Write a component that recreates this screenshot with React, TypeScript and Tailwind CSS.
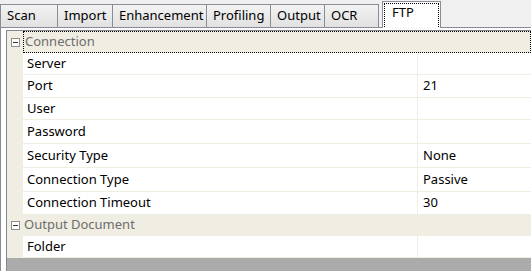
import React from "react";

const tabs = [
  { label: "Scan", w: "w-[58px]" },
  { label: "Import", w: "w-[56px]" },
  { label: "Enhancement", w: "w-[95px]" },
  { label: "Profiling", w: "w-[65px]" },
  { label: "Output", w: "w-[55px]" },
  { label: "OCR", w: "w-[55px]" },
];

type Row = { kind: "cat" | "prop"; label: string; value?: string; h: string; focus?: boolean };

const rows: Row[] = [
  { kind: "cat", label: "Connection", h: "h-[22px]", focus: true },
  { kind: "prop", label: "Server", h: "h-[22px]" },
  { kind: "prop", label: "Port", value: "21", h: "h-[23px]" },
  { kind: "prop", label: "User", h: "h-[22px]" },
  { kind: "prop", label: "Password", h: "h-[24px]" },
  { kind: "prop", label: "Security Type", value: "None", h: "h-[24px]" },
  { kind: "prop", label: "Connection Type", value: "Passive", h: "h-[24px]" },
  { kind: "prop", label: "Connection Timeout", value: "30", h: "h-[23px]" },
  { kind: "cat", label: "Output Document", h: "h-[21px]" },
  { kind: "prop", label: "Folder", h: "h-[22px]" },
];

const MinusBox = () => (
  <div className="w-[9px] h-[9px] border border-[#8e8f8f] bg-white flex items-center justify-center">
    <div className="w-[5px] h-px bg-[#333]" />
  </div>
);

export default function App() {
  return (
    <div
      className="w-[531px] h-[271px] overflow-hidden bg-[#f0f0f0] flex flex-col text-[13px] text-black"
      style={{ fontFamily: '"Noto Sans", "Open Sans", sans-serif' }}
    >
      {/* Tab strip */}
      <div className="h-[27px] flex items-end shrink-0">
        {tabs.map((t) => (
          <div
            key={t.label}
            className={`${t.w} h-[23px] -mr-px border border-b-0 border-[#898c95] bg-gradient-to-b from-[#f3f3f3] to-[#e1e1e1] pl-[6px] leading-[21px]`}
          >
            {t.label}
          </div>
        ))}
        <div className="w-[4px] h-[23px]" />
        <div className="w-[59px] h-[27px] border border-b-0 border-[#898c95] bg-white p-px relative z-10 -mb-px">
          <div className="h-full border border-dotted border-black border-b-0 pl-[7px] leading-[17px]">FTP</div>
        </div>
        <div className="flex-1" />
      </div>

      {/* Panel */}
      <div className="flex-1 border-t border-l border-[#898c95] bg-white pt-[2px] pl-[5px]">
        <div className="border-t border-l border-[#828790] h-full flex flex-col">
          <div className="flex flex-col">
            {rows.map((r) =>
              r.kind === "cat" ? (
                <div key={r.label} className={`${r.h} flex bg-[#f0ede2]`}>
                  <div className="w-[16px] shrink-0 flex items-center justify-center">
                    <MinusBox />
                  </div>
                  <div
                    className={`flex-1 flex items-center pl-[1px] text-[#6d6d6d] border-b border-[#f0ede2] ${
                      r.focus ? "border border-dotted border-black" : ""
                    }`}
                  >
                    {r.label}
                  </div>
                </div>
              ) : (
                <div key={r.label} className={`${r.h} flex`}>
                  <div className="w-[16px] shrink-0 bg-[#f0ede2]" />
                  <div className="w-[395px] shrink-0 flex items-center pl-[4px] border-b border-r border-[#f0ede2]">
                    {r.label}
                  </div>
                  <div className="flex-1 flex items-center pl-[5px] border-b border-[#f0ede2]">
                    {r.value}
                  </div>
                </div>
              )
            )}
          </div>
          <div className="flex-1 bg-[#ababab]" />
        </div>
      </div>
    </div>
  );
}
